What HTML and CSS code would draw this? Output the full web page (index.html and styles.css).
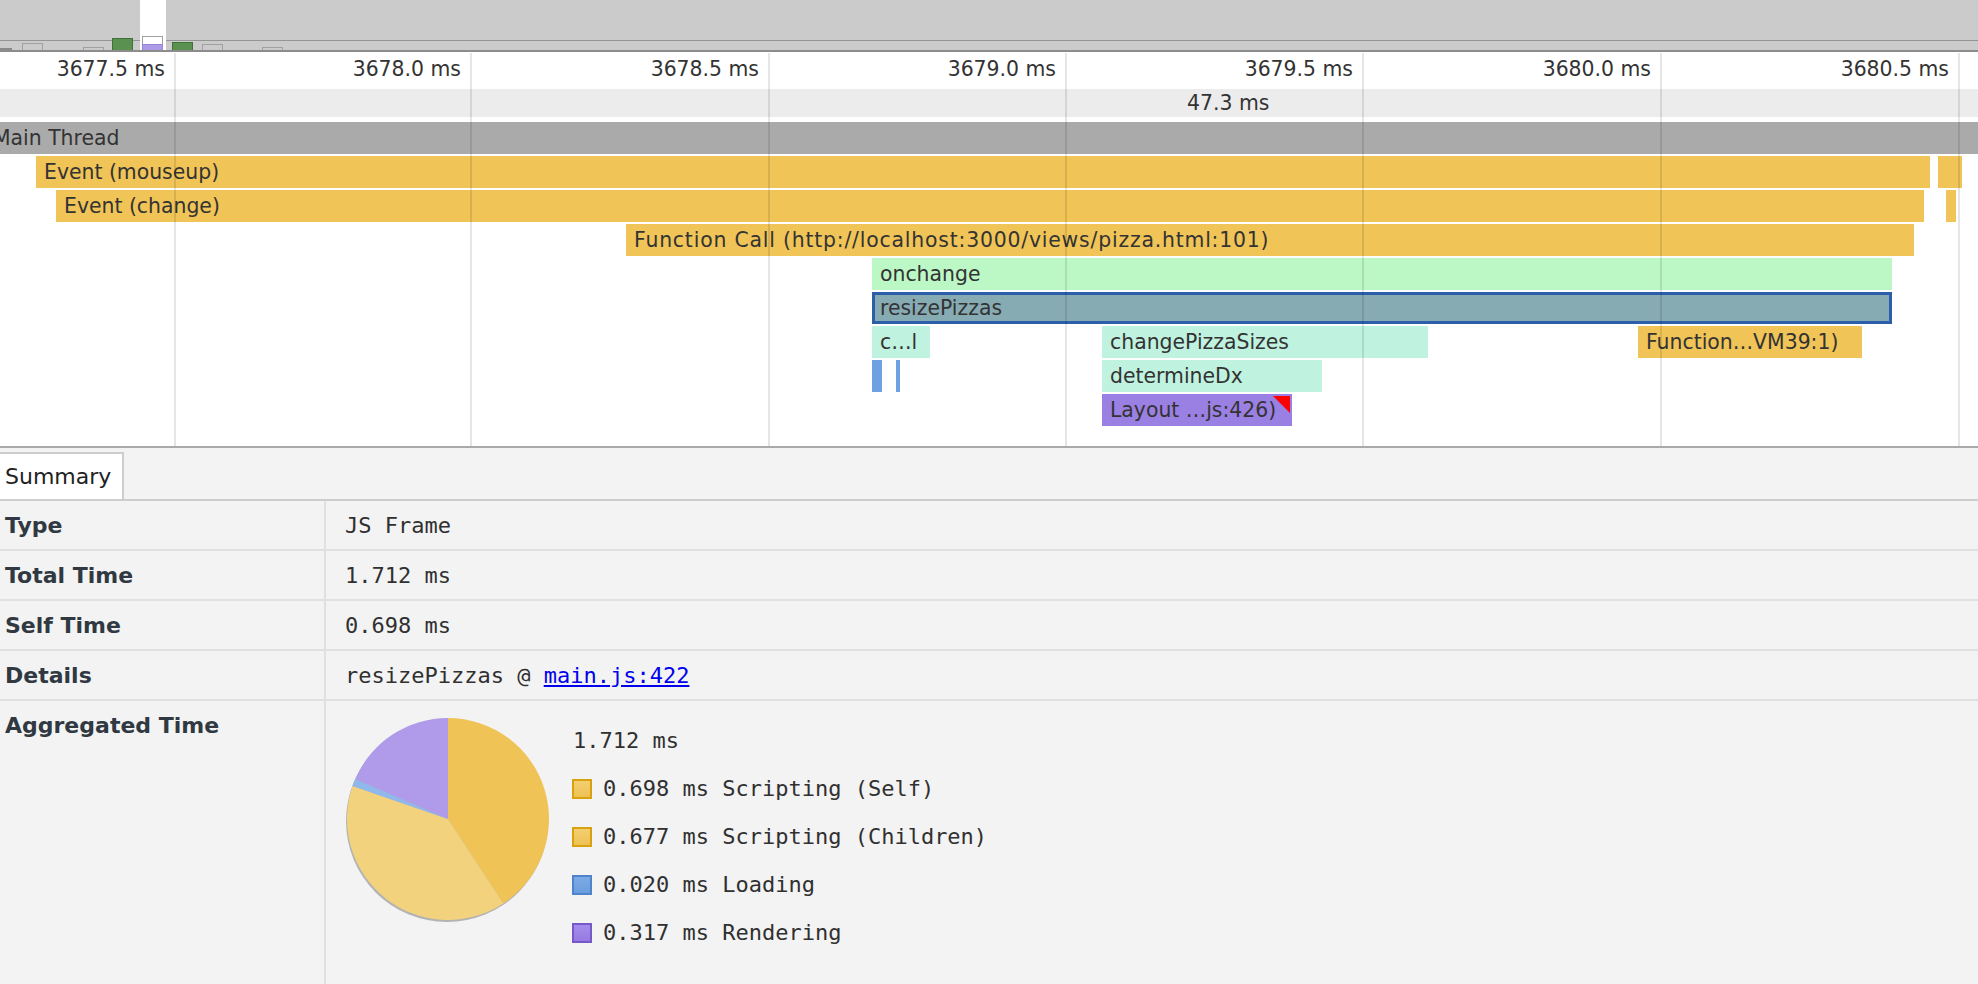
FILE: index.html
```html
<!DOCTYPE html>
<html>
<head>
<meta charset="utf-8">
<link rel="stylesheet" href="styles.css">
</head>
<body>
<div class="overview">
  <div class="ov-line"></div>
  <div class="ov-mark" style="left:0;width:12px;height:2px"></div>
  <div class="ov-item" style="left:22px;width:21px;height:7px"></div>
  <div class="ov-item" style="left:83px;width:21px;height:3px"></div>
  <div class="ov-item ov-green" style="left:112px;width:21px;height:12px"></div>
  <div class="ov-window"></div>
  <div class="ov-item" style="left:142px;width:21px;height:14px"></div>
  <div class="ov-item ov-purple" style="left:142px;width:21px;height:6px"></div>
  <div class="ov-item ov-green" style="left:172px;width:21px;height:8px"></div>
  <div class="ov-item" style="left:202px;width:21px;height:6px"></div>
  <div class="ov-item" style="left:262px;width:21px;height:3px"></div>
</div>

<div class="timeline">
  <div class="ruler">
    <span class="tick" style="left:165px">3677.5 ms</span>
    <span class="tick" style="left:461px">3678.0 ms</span>
    <span class="tick" style="left:759px">3678.5 ms</span>
    <span class="tick" style="left:1056px">3679.0 ms</span>
    <span class="tick" style="left:1353px">3679.5 ms</span>
    <span class="tick" style="left:1651px">3680.0 ms</span>
    <span class="tick" style="left:1949px">3680.5 ms</span>
  </div>
  <div class="band"><span class="band-label">47.3 ms</span></div>
  <div class="flame">
    <div class="row">
      <div class="bar thread" style="left:0;width:1978px"><span class="thread-name">Main Thread</span></div>
    </div>
    <div class="row">
      <div class="bar script" style="left:36px;width:1894px">Event (mouseup)</div>
      <div class="bar script" style="left:1938px;width:24px"></div>
    </div>
    <div class="row">
      <div class="bar script" style="left:56px;width:1868px">Event (change)</div>
      <div class="bar script" style="left:1946px;width:10px"></div>
    </div>
    <div class="row">
      <div class="bar script url" style="left:626px;width:1288px">Function Call (http://localhost:3000/views/pizza.html:101)</div>
    </div>
    <div class="row">
      <div class="bar green" style="left:872px;width:1020px">onchange</div>
    </div>
    <div class="row">
      <div class="bar selected" style="left:872px;width:1020px">resizePizzas</div>
    </div>
    <div class="row">
      <div class="bar mint" style="left:872px;width:58px">c…l</div>
      <div class="bar mint" style="left:1102px;width:326px">changePizzaSizes</div>
      <div class="bar script" style="left:1638px;width:224px">Function…VM39:1)</div>
    </div>
    <div class="row">
      <div class="bar loading" style="left:872px;width:10px"></div>
      <div class="bar loading" style="left:896px;width:4px"></div>
      <div class="bar mint" style="left:1102px;width:220px">determineDx</div>
    </div>
    <div class="row">
      <div class="bar render warn" style="left:1102px;width:190px">Layout …js:426)</div>
    </div>
  </div>
  <div class="gridline" style="left:174px"></div>
  <div class="gridline" style="left:470px"></div>
  <div class="gridline" style="left:768px"></div>
  <div class="gridline" style="left:1065px"></div>
  <div class="gridline" style="left:1362px"></div>
  <div class="gridline" style="left:1660px"></div>
  <div class="gridline" style="left:1958px"></div>
</div>

<div class="panel">
  <div class="tabs"><div class="tab">Summary</div></div>
  <div class="details">
    <div class="label">Type</div>
    <div class="value">JS Frame</div>
    <div class="label">Total Time</div>
    <div class="value">1.712 ms</div>
    <div class="label">Self Time</div>
    <div class="value">0.698 ms</div>
    <div class="label">Details</div>
    <div class="value">resizePizzas @&nbsp;<a class="link" href="#">main.js:422</a></div>
    <div class="label label-agg">Aggregated Time</div>
    <div class="value value-agg">
      <svg class="pie" width="206" height="206" viewBox="0 0 206 206">
        <circle cx="101" cy="103" r="101" fill="#b3b3b3"/>
        <path d="M102,101 L102,0 A101,101 0 0 1 157.34,185.5 Z" fill="#f0c357"/>
        <path d="M102,101 L157.34,185.5 A101,101 0 0 1 6.59,67.88 Z" fill="#f2d27c"/>
        <path d="M102,101 L6.59,67.88 A101,101 0 0 1 9.27,60.97 Z" fill="#8fb8ec"/>
        <path d="M102,101 L9.27,60.97 A101,101 0 0 1 102,0 Z" fill="#af9bea"/>
      </svg>
      <div class="legend">
        <div class="legend-total">1.712 ms</div>
        <div class="legend-row"><span class="swatch sw-script"></span>0.698 ms Scripting (Self)</div>
        <div class="legend-row"><span class="swatch sw-script"></span>0.677 ms Scripting (Children)</div>
        <div class="legend-row"><span class="swatch sw-loading"></span>0.020 ms Loading</div>
        <div class="legend-row"><span class="swatch sw-render"></span>0.317 ms Rendering</div>
      </div>
    </div>
  </div>
</div>
</body>
</html>
```

FILE: styles.css
```css
* { box-sizing: border-box; }
html, body { margin: 0; padding: 0; }
body {
  width: 1978px;
  height: 984px;
  overflow: hidden;
  background: #f3f3f3;
  font-family: "DejaVu Sans", "Liberation Sans", sans-serif;
  color: #333;
}

/* overview strip */
.overview {
  position: relative;
  height: 52px;
  background: #cbcbcb;
  border-bottom: 2px solid #8c8c8c;
  overflow: hidden;
}
.ov-line {
  position: absolute;
  left: 0; right: 0; top: 40px;
  height: 1px;
  background: #959595;
}
.ov-window {
  position: absolute;
  left: 140px; width: 26px;
  top: 0; bottom: 0;
  background: #fff;
}
.ov-mark {
  position: absolute;
  bottom: 0;
  background: #8a8a8a;
}
.ov-item {
  position: absolute;
  bottom: 0;
  border: 1px solid #a0a0a0;
  border-bottom: none;
}
.ov-green { background: #5a9150; border-color: #3e7336; }
.ov-purple { background: #ad9be8; border-color: #9884d8; }

/* timeline */
.timeline {
  position: relative;
  height: 396px;
  background: #fff;
  border-bottom: 2px solid #a9a9a9;
  overflow: hidden;
}
.ruler {
  position: relative;
  height: 37px;
}
.tick {
  position: absolute;
  top: 0;
  line-height: 34px;
  font-size: 20.4px;
  color: #333;
  white-space: nowrap;
  transform: translateX(-100%);
}
.band {
  position: relative;
  height: 28px;
  background: #ececec;
  margin-bottom: 5px;
}
.band-label {
  position: absolute;
  left: 1187px;
  top: 0;
  line-height: 28px;
  font-size: 20.4px;
  color: #333;
  white-space: nowrap;
}
.flame {
  position: relative;
}
.row {
  position: relative;
  height: 32px;
  margin-bottom: 2px;
}
.bar {
  position: absolute;
  top: 0;
  height: 32px;
  line-height: 32px;
  padding-left: 8px;
  font-size: 20.4px;
  color: #333;
  white-space: nowrap;
  overflow: hidden;
}
.url { letter-spacing: 0.8px; }
.thread { background: #aaaaaa; padding-left: 0; }
.thread-name { margin-left: -7px; }
.script { background: #f0c457; }
.green { background: #bbf8c5; }
.mint { background: #c0f2e0; }
.loading { background: #6ea0e2; padding-left: 0; }
.render { background: #9b80e4; }
.selected {
  background: #86abb3;
  border: 3px solid #2d5ea9;
  line-height: 26px;
  padding-left: 5px;
}
.warn::after {
  content: "";
  position: absolute;
  right: 2px;
  top: 2px;
  width: 0;
  height: 0;
  border-top: 17px solid #ff0000;
  border-left: 17px solid transparent;
}
.gridline {
  position: absolute;
  top: 1px;
  bottom: 0;
  width: 2px;
  background: rgba(0, 0, 0, 0.1);
}

/* details panel */
.panel {
  background: #f3f3f3;
}
.tabs {
  display: flex;
  padding-top: 4px;
  border-bottom: 2px solid #cdcdcd;
}
.tab {
  height: 47px;
  line-height: 45px;
  padding: 0 11px 0 5px;
  background: #fff;
  border-top: 2px solid #cdcdcd;
  border-right: 2px solid #cdcdcd;
  font-size: 22px;
  color: #222;
}
.details {
  display: grid;
  grid-template-columns: 326px 1fr;
}
.label {
  height: 50px;
  display: flex;
  align-items: center;
  padding-left: 5px;
  border-right: 2px solid #e0e0e0;
  border-bottom: 2px solid #e0e0e0;
  font-weight: bold;
  font-size: 22px;
  color: #303942;
}
.value {
  height: 50px;
  display: flex;
  align-items: center;
  padding-left: 19px;
  border-bottom: 2px solid #e0e0e0;
  font-family: "DejaVu Sans Mono", "Liberation Mono", monospace;
  font-size: 22px;
  color: #303030;
  white-space: nowrap;
}
.link { color: #0000ee; text-decoration: underline; }
.label-agg {
  height: 284px;
  align-items: flex-start;
  padding-top: 12px;
  border-bottom: none;
}
.value-agg {
  height: 284px;
  align-items: flex-start;
  padding-top: 17px;
  padding-left: 20px;
  gap: 20px;
  border-bottom: none;
}
.pie { display: block; flex: none; }
.legend {
  margin-top: -1px;
  line-height: 26px;
}
.legend-total {
  height: 48px;
  display: flex;
  align-items: center;
  padding-left: 1px;
}
.legend-row {
  height: 48px;
  display: flex;
  align-items: center;
  gap: 11px;
}
.swatch {
  width: 20px;
  height: 20px;
  border: 2px solid;
  flex: none;
}
.sw-script { background: linear-gradient(#f3cf72, #efc152); border-color: #d9a10f; }
.sw-loading { background: linear-gradient(#7eaae6, #6a9ddf); border-color: #4f84cb; }
.sw-render { background: linear-gradient(#a58ceb, #977ae2); border-color: #7658c9; }
```
